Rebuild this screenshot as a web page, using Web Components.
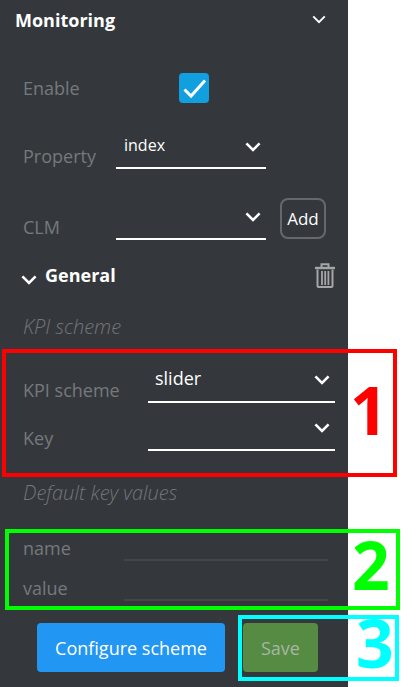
<!DOCTYPE html>
<html>
<head>
<meta charset="utf-8">
<style>
  html, body { margin: 0; background: #fff; }
  body { font-family: "Open Sans", sans-serif; font-size: 18px; width: 420px; height: 687px; overflow: hidden; }
</style>
</head>
<body>
<settings-panel>
  <section-head title="Monitoring" variant="top"></section-head>

  <form-row label="Enable" raised style="margin-top:33px"><check-box></check-box></form-row>
  <form-row label="Property" indent="93" style="margin-top:26px"><drop-down value="index" width="150" height="40" small></drop-down></form-row>
  <form-row label="CLM" indent="93" style="margin-top:30px">
    <drop-down width="150" height="41"></drop-down>
    <ui-button kind="outline">Add</ui-button>
  </form-row>

  <section-head title="General" variant="sub" style="margin-top:22px"></section-head>
  <hint-text style="margin-top:28px">KPI scheme</hint-text>

  <form-row label="KPI scheme" indent="125" style="margin-top:24px"><drop-down value="slider" width="187" height="41"></drop-down></form-row>
  <form-row label="Key" indent="125" style="margin-top:7px"><drop-down width="187" height="41"></drop-down></form-row>

  <hint-text style="margin-top:31px">Default key values</hint-text>

  <form-row label="name" indent="101" style="margin-top:30px"><text-field></text-field></form-row>
  <form-row label="value" indent="101" style="margin-top:13px"><text-field></text-field></form-row>

  <div style="display:flex;gap:18px;margin:22px 0 0 37px">
    <ui-button kind="primary">Configure scheme</ui-button>
    <ui-button kind="save">Save</ui-button>
  </div>
</settings-panel>

<mark-box n="1" color="#ff0000" style="left:2px;top:349px;width:395px;height:128px" num-left="344" num-top="26"></mark-box>
<mark-box n="2" color="#00ff00" style="left:5px;top:529px;width:395px;height:81px" num-left="343" num-top="1"></mark-box>
<mark-box n="3" color="#00ffff" style="left:238px;top:615px;width:161px;height:66px" num-left="114" num-top="-7"></mark-box>

<script>
const chevron = (w, sw) => `<svg width="${w}" height="${Math.round(w * 10 / 16)}" viewBox="0 0 16 10" fill="none" stroke="#fff" stroke-width="${sw}"><path d="M1.4 1.4 8 8 14.6 1.4"/></svg>`;

class SettingsPanel extends HTMLElement {
  constructor() {
    super();
    this.attachShadow({ mode: 'open' });
    this.shadowRoot.innerHTML = `
      <style>
        :host { display: block; width: 348px; height: 687px; background: #34383c; overflow: hidden; }
      </style>
      <slot></slot>`;
  }
}

class SectionHead extends HTMLElement {
  constructor() {
    super();
    this.attachShadow({ mode: 'open' });
  }
  connectedCallback() {
    const title = this.getAttribute('title') || '';
    const top = this.getAttribute('variant') === 'top';
    this.shadowRoot.innerHTML = `
      <style>
        :host { display: flex; align-items: center; color: #fff; font-weight: 700; font-size: 18px; height: ${top ? 40 : 26}px; }
        .title { line-height: 22px; }
        .top { padding: 0 22px 0 15px; flex: 1; display: flex; align-items: center; justify-content: space-between; }
        .top svg { margin-top: -2px; }
        .sub { padding: 0 13px 0 21px; flex: 1; display: flex; align-items: center; }
        .sub .arrow { margin: 10px 8px 0 0; display: flex; }
        .sub .title { flex: 1; }
      </style>
      ${top
        ? `<div class="top"><span class="title">${title}</span>${chevron(14, 2.2)}</div>`
        : `<div class="sub"><span class="arrow">${chevron(16, 2.6)}</span><span class="title">${title}</span>
            <svg width="20" height="26" viewBox="0 0 20 26" fill="none" stroke="#a4a6a7">
              <path d="M0 6h20" stroke-width="2.4"/>
              <path d="M6.5 5V2.2h7V5" stroke-width="2"/>
              <path d="M2.5 7.5V24c0 .8.5 1 1 1h13c.5 0 1-.2 1-1V7.5" stroke-width="2"/>
              <path d="M7 9v14M10.2 9v14M13.4 9v14" stroke-width="1.8"/>
            </svg></div>`}`;
  }
}

class HintText extends HTMLElement {
  constructor() {
    super();
    this.attachShadow({ mode: 'open' });
    this.shadowRoot.innerHTML = `
      <style>
        :host { display: block; padding-left: 23px; color: #73767a; font-style: italic; font-weight: 300; font-size: 20px; line-height: 22px; }
      </style>
      <slot></slot>`;
  }
}

class FormRow extends HTMLElement {
  constructor() {
    super();
    this.attachShadow({ mode: 'open' });
  }
  connectedCallback() {
    const label = this.getAttribute('label') || '';
    const indent = this.getAttribute('indent') || '156';
    this.shadowRoot.innerHTML = `
      <style>
        :host { display: flex; align-items: stretch; padding-left: 23px; }
        .label { width: ${indent}px; flex: none; align-self: flex-end; padding-bottom: 2px; line-height: 22px; font-size: 18px; color: #76797c; }
        :host([raised]) .label { padding-bottom: 4px; }
        .body { display: flex; align-items: flex-start; gap: 14px; }
      </style>
      <span class="label">${label}</span>
      <div class="body"><slot></slot></div>`;
  }
}

class CheckBox extends HTMLElement {
  constructor() {
    super();
    this.attachShadow({ mode: 'open' });
    this.shadowRoot.innerHTML = `
      <style>
        :host { display: block; width: 30px; height: 30px; border-radius: 4px; background: #129fe0; }
        svg { display: block; }
      </style>
      <svg width="30" height="30" viewBox="0 0 30 30" fill="none" stroke="#fff" stroke-width="3"><path d="M5.5 16.5 12 23 26 7.5"/></svg>`;
    this.setAttribute('role', 'checkbox');
  }
}

class DropDown extends HTMLElement {
  constructor() {
    super();
    this.attachShadow({ mode: 'open' });
  }
  connectedCallback() {
    const value = this.getAttribute('value') || '';
    const width = this.getAttribute('width') || '150';
    const height = this.getAttribute('height') || '40';
    this.shadowRoot.innerHTML = `
      <style>
        :host { display: block; width: ${width}px; height: ${height}px; box-sizing: border-box; border-bottom: 2px solid #fff; color: #fff; font-size: 18px; }
        :host([small]) { font-size: 16px; }
        .box { display: flex; justify-content: space-between; padding: 5px 5px 0 7px; }
        :host([small]) .box { padding-left: 8px; }
        .value { line-height: 22px; }
        .icon { display: flex; margin-top: 8px; margin-left: auto; }
      </style>
      <div class="box"><span class="value">${value}</span><span class="icon">${chevron(16, 2.6)}</span></div>`;
  }
}

class TextField extends HTMLElement {
  constructor() {
    super();
    this.attachShadow({ mode: 'open' });
    this.shadowRoot.innerHTML = `
      <style>
        :host { display: block; width: 204px; height: 27px; box-sizing: border-box; border-bottom: 2px solid #43474b; }
      </style>`;
  }
}

class UiButton extends HTMLElement {
  constructor() {
    super();
    this.attachShadow({ mode: 'open' });
    this.shadowRoot.innerHTML = `
      <style>
        :host { display: flex; align-items: center; justify-content: center; box-sizing: border-box; font-size: 18px; }
        :host([kind="primary"]) { width: 188px; height: 49px; background: #2196f3; color: #fff; border-radius: 4px; }
        :host([kind="save"]) { width: 75px; height: 49px; background: #558b43; color: #a9b5a5; border-radius: 4px; }
        :host([kind="outline"]) { width: 46px; height: 41px; margin-top: -1px; border: 2px solid #66696c; border-radius: 8px; color: #fff; font-size: 17px; }
      </style>
      <slot></slot>`;
  }
}

class MarkBox extends HTMLElement {
  constructor() {
    super();
    this.attachShadow({ mode: 'open' });
  }
  connectedCallback() {
    const n = this.getAttribute('n');
    const color = this.getAttribute('color');
    this.shadowRoot.innerHTML = `
      <style>
        :host { display: block; position: absolute; box-sizing: border-box; border: 4px solid ${color}; }
        .num { position: absolute; left: ${this.getAttribute('num-left')}px; top: ${this.getAttribute('num-top')}px; color: ${color}; font-weight: 700; font-size: 66px; line-height: 60px; }
      </style>
      <span class="num">${n}</span>`;
  }
}

customElements.define('settings-panel', SettingsPanel);
customElements.define('section-head', SectionHead);
customElements.define('hint-text', HintText);
customElements.define('form-row', FormRow);
customElements.define('check-box', CheckBox);
customElements.define('drop-down', DropDown);
customElements.define('text-field', TextField);
customElements.define('ui-button', UiButton);
customElements.define('mark-box', MarkBox);
</script>
</body>
</html>
